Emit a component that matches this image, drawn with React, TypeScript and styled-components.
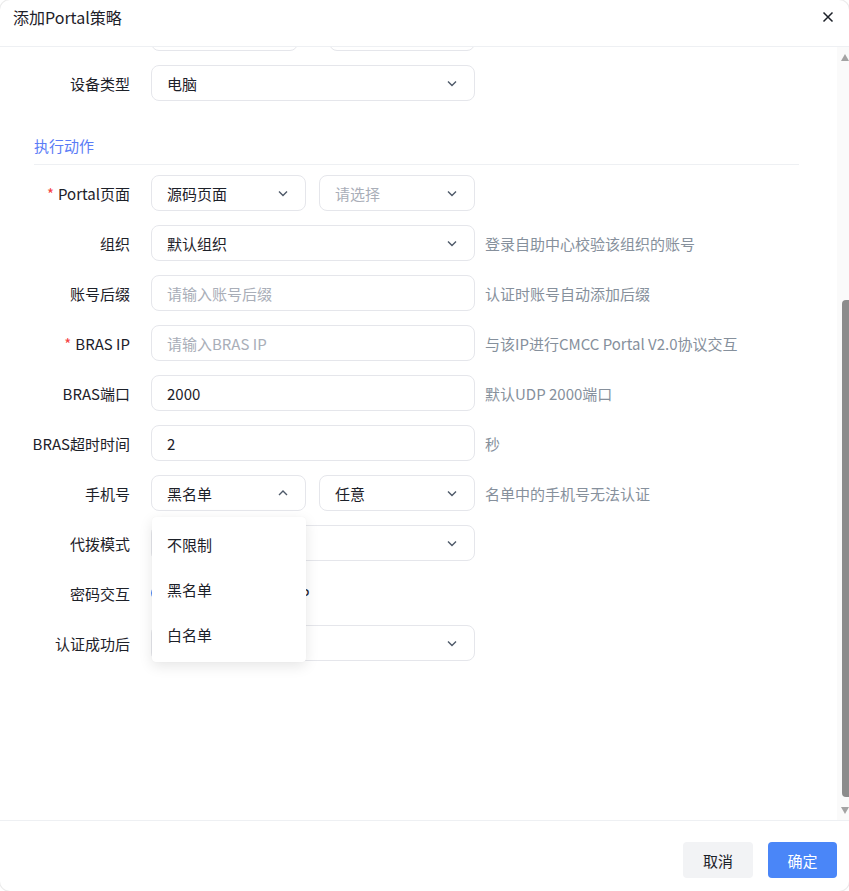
import React, { useLayoutEffect, useRef } from 'react'
import styled, { createGlobalStyle } from 'styled-components'

const GlobalStyle = createGlobalStyle`
  html, body {
    margin: 0;
    padding: 0;
    background: #fff;
  }
  body {
    font-family: "Noto Sans CJK SC", "Noto Sans", sans-serif;
    font-size: 15px;
    color: #1d2129;
  }
  * { box-sizing: border-box; }
`

const Dialog = styled.div`
  width: 849px;
  height: 891px;
  display: flex;
  flex-direction: column;
  background: #fff;
  border-radius: 10px;
  box-shadow: 0 0 0 1px rgba(0, 0, 0, 0.08);
  overflow: hidden;
`

const Header = styled.div`
  height: 47px;
  flex: none;
  display: flex;
  align-items: center;
  justify-content: space-between;
  padding: 0 15px 0 13px;
  border-bottom: 1px solid #eef0f3;
`

const Title = styled.div`
  font-size: 16px;
  line-height: 22px;
  color: #1d2129;
  margin-top: -12px;
`

const CloseBtn = styled.div`
  width: 12px;
  height: 12px;
  display: flex;
  margin-top: -12px;
`

const Body = styled.div`
  flex: 1;
  min-height: 0;
  display: flex;
`

const Scroller = styled.div`
  flex: 1;
  overflow-y: auto;
  scrollbar-width: none;
  &::-webkit-scrollbar { display: none; }
`

const Content = styled.div`
  display: flex;
  flex-direction: column;
  padding: 20px 0 200px;
`

const ScrollBar = styled.div`
  width: 12px;
  flex: none;
  background: #fafafa;
  display: flex;
  flex-direction: column;
  align-items: flex-end;
  padding: 6px 0 5px;
`

const Arrow = styled.div`
  width: 8px;
  height: 9px;
  display: flex;
`

const Track = styled.div`
  flex: 1;
  width: 7px;
  position: relative;
  margin: 0 0 2px;
`

const Thumb = styled.div`
  position: absolute;
  left: 0;
  right: 0;
  background: #8c8c8c;
  border-radius: 4px 0 0 4px;
`

const SectionHeader = styled.div<{ $top: number }>`
  margin: ${p => p.$top}px 38px 10px 34px;
  padding-bottom: 7px;
  line-height: 22px;
  color: #5b7cf6;
  border-bottom: 1px solid #eef0f3;
`

const Row = styled.div`
  display: flex;
  align-items: center;
  height: 36px;
  margin-bottom: 14px;
`

const Label = styled.div`
  width: 130px;
  flex: none;
  margin-right: 21px;
  text-align: right;
  white-space: nowrap;
  color: #1d2129;
`

const Star = styled.span`
  color: #f53f3f;
  margin-right: 4px;
`

const Controls = styled.div<{ $gap?: number }>`
  display: flex;
  align-items: center;
  gap: ${p => p.$gap ?? 13}px;
`

const Field = styled.div<{ $w: number }>`
  position: relative;
  width: ${p => p.$w}px;
  height: 36px;
  border: 1px solid #e5e6eb;
  border-radius: 8px;
  background: #fff;
  padding: 0 16px 0 15px;
  display: flex;
  align-items: center;
  justify-content: space-between;
`

const Value = styled.span<{ $ph?: boolean }>`
  color: ${p => (p.$ph ? '#a9aeb8' : '#1d2129')};
  white-space: nowrap;
`

const Hint = styled.span`
  margin-left: 10px;
  color: #86909c;
  white-space: nowrap;
`

const Sep = styled.span`
  color: #86909c;
`

const Menu = styled.div`
  position: absolute;
  top: calc(100% + 7px);
  left: 0;
  width: 154px;
  padding: 5px 0;
  background: #fff;
  border-radius: 4px;
  box-shadow: 0 4px 14px rgba(0, 0, 0, 0.1), 0 0 1px rgba(0, 0, 0, 0.06);
  z-index: 10;
`

const MenuItem = styled.div`
  height: 45px;
  line-height: 45px;
  padding-left: 15px;
  color: #1d2129;
`

const RadioItem = styled.label`
  display: flex;
  align-items: center;
  gap: 8px;
`

const RadioDot = styled.span<{ $on?: boolean }>`
  width: 14px;
  height: 14px;
  border-radius: 50%;
  border: ${p => (p.$on ? '4px solid #4a86f8' : '1px solid #c9cdd4')};
  background: #fff;
`

const Footer = styled.div`
  height: 71px;
  flex: none;
  border-top: 1px solid #eef0f3;
  display: flex;
  justify-content: flex-end;
  gap: 15px;
  padding: 21px 12px 0 0;
`

const Button = styled.button<{ $primary?: boolean }>`
  width: ${p => (p.$primary ? 69 : 70)}px;
  height: 36px;
  border: none;
  border-radius: 4px;
  font-family: inherit;
  font-size: 15px;
  background: ${p => (p.$primary ? '#4a86f8' : '#f2f3f5')};
  color: ${p => (p.$primary ? '#fff' : '#1d2129')};
`

const Chevron = ({ up }: { up?: boolean }) => (
  <svg width="12" height="12" viewBox="0 0 12 12">
    <path
      d={up ? 'M2 8 L6 4 L10 8' : 'M2 4.5 L6 8.5 L10 4.5'}
      fill="none"
      stroke="#4e5969"
      strokeWidth="1.4"
    />
  </svg>
)

interface ISelectProps {
  w: number
  value?: string
  placeholder?: string
  open?: boolean
  options?: string[]
  chevron?: boolean
}

function Select({ w, value, placeholder, open, options, chevron = true }: ISelectProps) {
  return (
    <Field $w={w}>
      {value ? <Value>{value}</Value> : <Value $ph>{placeholder}</Value>}
      {chevron && <Chevron up={open} />}
      {open && options && (
        <Menu>
          {options.map(o => (
            <MenuItem key={o}>{o}</MenuItem>
          ))}
        </Menu>
      )}
    </Field>
  )
}

function FormRow({ label, required, children, hint, gap }: { label: string, required?: boolean, children: React.ReactNode, hint?: string, gap?: number }) {
  return (
    <Row>
      <Label>
        {required && <Star>*</Star>}
        {label}
      </Label>
      <Controls $gap={gap}>{children}</Controls>
      {hint && <Hint>{hint}</Hint>}
    </Row>
  )
}

const scrollInfo = { top: 142, thumbTop: 238, thumbHeight: 497 }

export default function App() {
  const ref = useRef<HTMLDivElement>(null)

  useLayoutEffect(() => {
    if (ref.current) ref.current.scrollTop = scrollInfo.top
  }, [])

  return (
    <>
      <GlobalStyle />
      <Dialog>
        <Header>
          <Title>添加Portal策略</Title>
          <CloseBtn>
            <svg width="12" height="12" viewBox="0 0 12 12">
              <path d="M1.5 1.5 L10.5 10.5 M10.5 1.5 L1.5 10.5" stroke="#1d2129" strokeWidth="1.5" />
            </svg>
          </CloseBtn>
        </Header>
        <Body>
          <Scroller ref={ref}>
            <Content>
              <SectionHeader $top={0}>匹配条件</SectionHeader>
              <FormRow label="策略名称" required>
                <Field $w={324}><Value $ph>请输入策略名称</Value></Field>
              </FormRow>
              <FormRow label="生效时间" gap={8}>
                <Select w={147} placeholder="开始时间" chevron={false} />
                <Sep>至</Sep>
                <Select w={146} placeholder="结束时间" chevron={false} />
              </FormRow>
              <FormRow label="设备类型">
                <Select w={324} value="电脑" />
              </FormRow>

              <SectionHeader $top={20}>执行动作</SectionHeader>
              <FormRow label="Portal页面" required>
                <Select w={155} value="源码页面" />
                <Select w={156} placeholder="请选择" />
              </FormRow>
              <FormRow label="组织" hint="登录自助中心校验该组织的账号">
                <Select w={324} value="默认组织" />
              </FormRow>
              <FormRow label="账号后缀" hint="认证时账号自动添加后缀">
                <Field $w={324}><Value $ph>请输入账号后缀</Value></Field>
              </FormRow>
              <FormRow label="BRAS IP" required hint="与该IP进行CMCC Portal V2.0协议交互">
                <Field $w={324}><Value $ph>请输入BRAS IP</Value></Field>
              </FormRow>
              <FormRow label="BRAS端口" hint="默认UDP 2000端口">
                <Field $w={324}><Value>2000</Value></Field>
              </FormRow>
              <FormRow label="BRAS超时时间" hint="秒">
                <Field $w={324}><Value>2</Value></Field>
              </FormRow>
              <FormRow label="手机号" hint="名单中的手机号无法认证">
                <Select w={155} value="黑名单" open options={['不限制', '黑名单', '白名单']} />
                <Select w={156} value="任意" />
              </FormRow>
              <FormRow label="代拨模式">
                <Select w={324} value="不启用" />
              </FormRow>
              <FormRow label="密码交互" gap={48}>
                <RadioItem><RadioDot $on />PAP</RadioItem>
                <RadioItem><RadioDot />CHAP</RadioItem>
              </FormRow>
              <FormRow label="认证成功后">
                <Select w={324} value="跳转原页面" />
              </FormRow>
            </Content>
          </Scroller>
          <ScrollBar>
            <Arrow>
              <svg width="8" height="9" viewBox="0 0 8 9"><path d="M4 1 L8 8 L0 8 Z" fill="#a3a3a3" /></svg>
            </Arrow>
            <Track>
              <Thumb style={{ top: scrollInfo.thumbTop, height: scrollInfo.thumbHeight }} />
            </Track>
            <Arrow>
              <svg width="8" height="9" viewBox="0 0 8 9"><path d="M0 1 L8 1 L4 8 Z" fill="#a3a3a3" /></svg>
            </Arrow>
          </ScrollBar>
        </Body>
        <Footer>
          <Button>取消</Button>
          <Button $primary>确定</Button>
        </Footer>
      </Dialog>
    </>
  )
}
